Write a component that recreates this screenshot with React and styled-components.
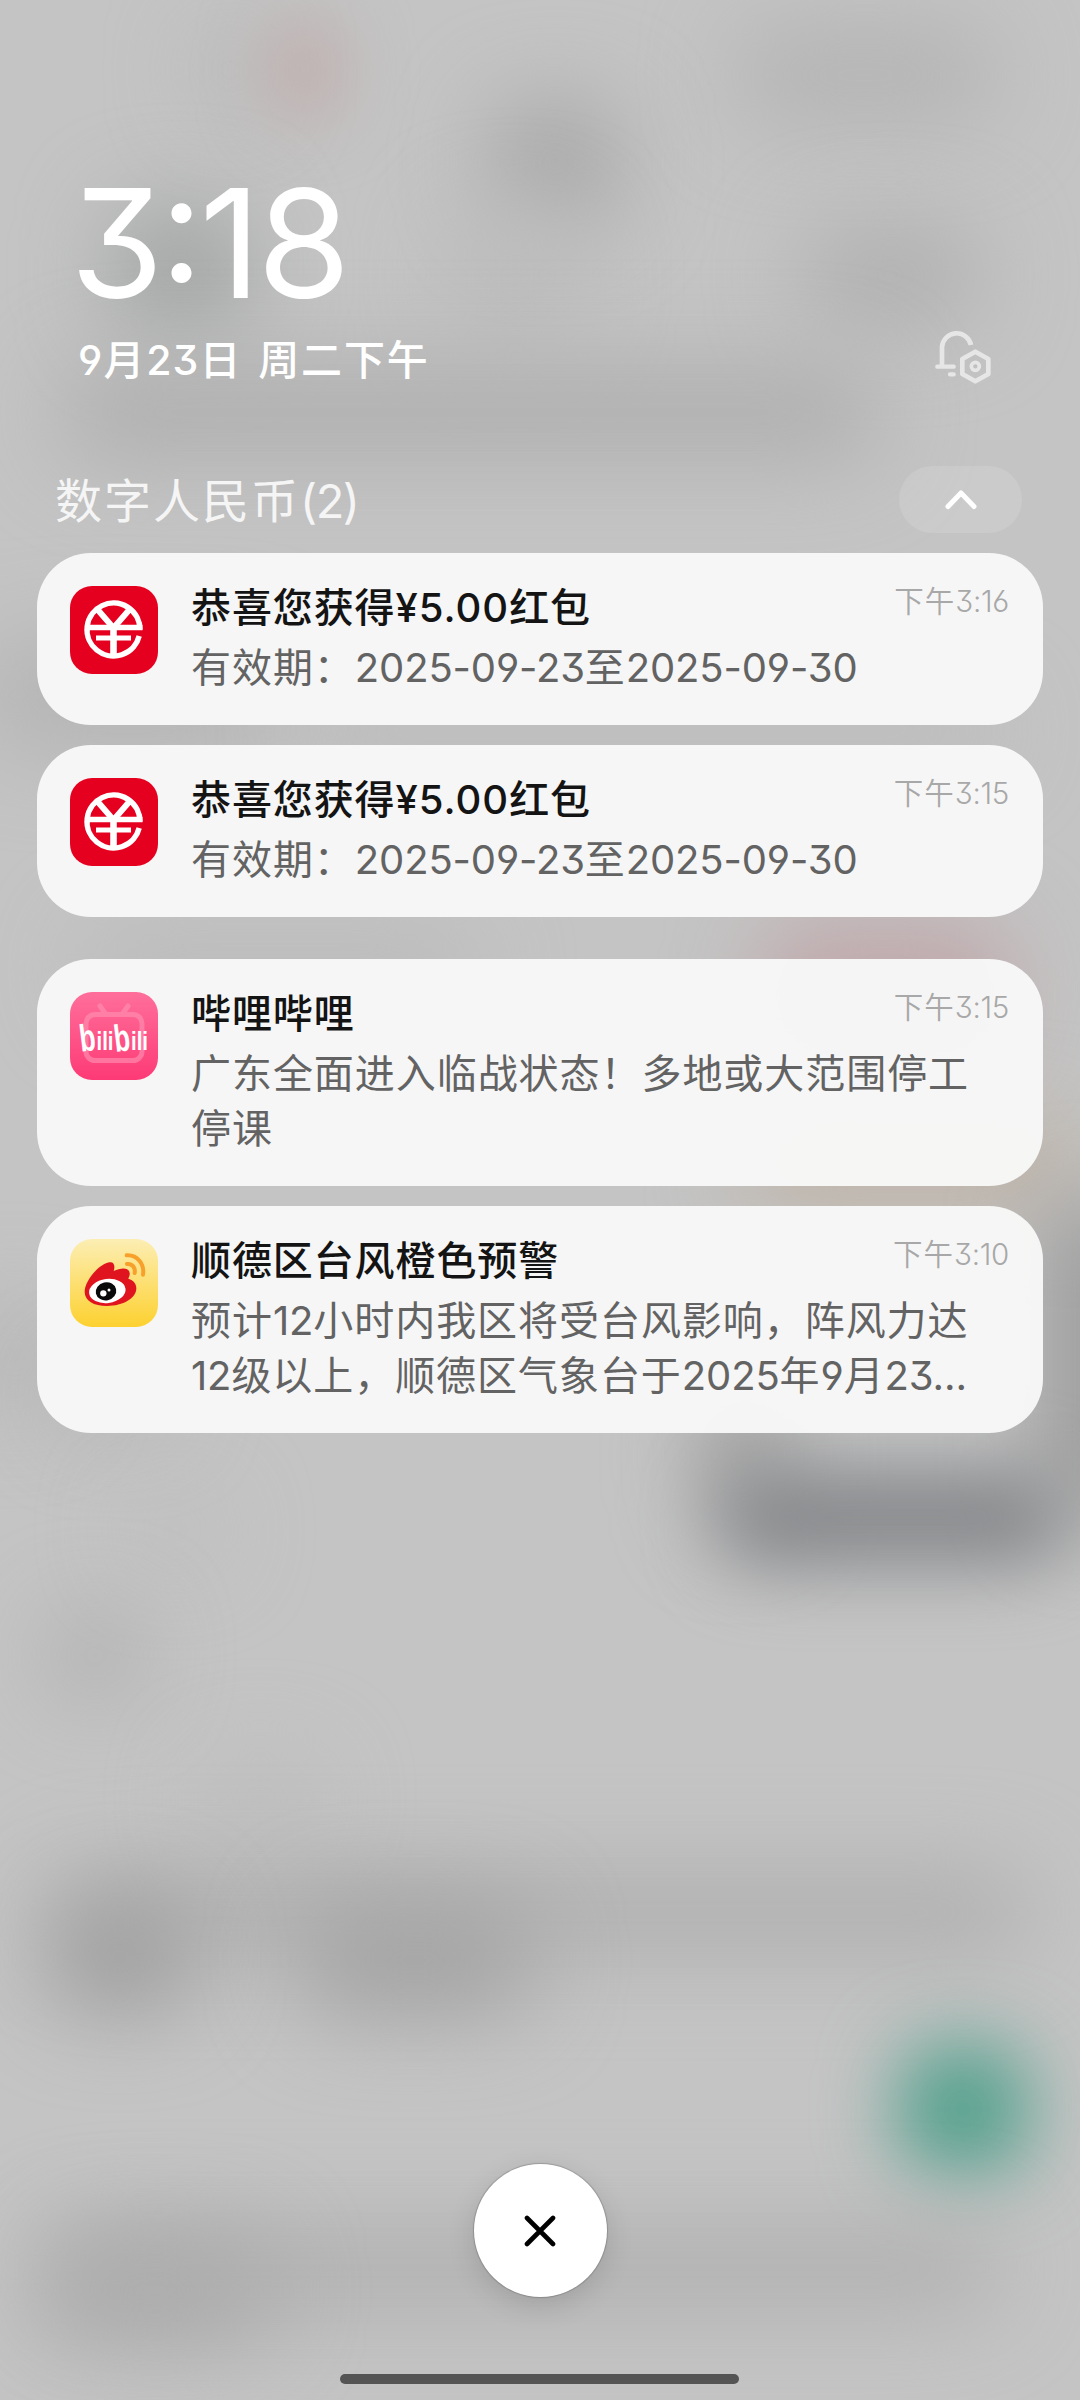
import React from 'react';
import styled, { createGlobalStyle } from 'styled-components';

const GlobalStyle = createGlobalStyle`
    body {
        margin: 0;
        background: #c4c4c4;
        font-family: 'Noto Sans CJK SC', sans-serif;
    }
`;

const Screen = styled.div`
    position: relative;
    width: 1080px;
    height: 2400px;
    box-sizing: border-box;
    padding: 168px 37px 16px;
    display: flex;
    flex-direction: column;
    overflow: hidden;
    isolation: isolate;
`;

// Blurred wallpaper, sits behind everything else.
const Wallpaper = styled.div`
    position: absolute;
    inset: 0;
    z-index: -1;
    background: #c4c4c4;
`;

const Blob = styled.div`
    position: absolute;
    left: ${p => p.$x}px;
    top: ${p => p.$y}px;
    width: ${p => p.$w}px;
    height: ${p => p.$h}px;
    border-radius: 40px;
    background: ${p => p.$color};
    filter: blur(${p => p.$blur || 44}px);
`;

// Digits and punctuation use Inter with flat three and open six / nine.
// The zero line-height keeps the run from stretching the line it sits in.
const Latin = styled.span`
    font-family: 'Inter', sans-serif;
    font-feature-settings: 'cv09', 'cv03', 'cv04';
    line-height: 0;
    letter-spacing: ${p => p.$spacing}px;
`;

const Clock = styled.div`
    display: flex;
    height: 150px;
    margin-left: 33px;
    line-height: 150px;
    font-family: 'Inter', sans-serif;
    font-feature-settings: 'cv09', 'case';
    font-size: 151px;
    font-weight: 370;
    letter-spacing: -3.8px;
    color: #fff;
`;

const DateRow = styled.div`
    display: flex;
    align-items: center;
    justify-content: space-between;
    height: 77px;
    padding: 0 51px 0 41px;
`;

const DateText = styled.div`
    font-size: 41px;
    font-weight: 500;
    line-height: 60px;
    letter-spacing: 1.8px;
    word-spacing: 5px;
    white-space: pre;
    color: #fff;
`;

const GroupHeader = styled.div`
    display: flex;
    align-items: center;
    justify-content: space-between;
    height: 67px;
    margin: 71px 0 20px;
    padding: 0 21px 0 18px;
`;

const GroupTitle = styled.div`
    font-size: 47px;
    line-height: 64px;
    padding-bottom: 3px;
    letter-spacing: 2px;
    color: #f5f5f5;
`;

const CollapseButton = styled.button`
    display: flex;
    align-items: center;
    justify-content: center;
    width: 123px;
    height: 67px;
    padding: 0;
    border: none;
    border-radius: 34px;
    background: rgba(255, 255, 255, 0.12);
`;

const Group = styled.div`
    display: flex;
    flex-direction: column;
    gap: 20px;
    margin-bottom: ${p => p.$last ? 0 : 42}px;
`;

const Card = styled.article`
    display: flex;
    height: ${p => p.$lines > 1 ? 227 : 172}px;
    box-sizing: border-box;
    padding: 25px 34px 0 33px;
    border-radius: 54px;
    background: rgba(248, 248, 248, 0.965);
`;

const AppIcon = styled.div`
    flex: none;
    width: 88px;
    height: 88px;
    margin: 8px 33px 0 0;
    border-radius: 22px;
    overflow: hidden;
    background: ${p => p.$background};

    > svg {
        display: block;
    }
`;

const Content = styled.div`
    flex: 1;
    min-width: 0;
`;

const TitleRow = styled.div`
    display: flex;
    justify-content: space-between;
    height: 60px;
`;

const Title = styled.div`
    font-size: 40px;
    font-weight: 500;
    line-height: 54px;
    letter-spacing: 0.9px;
    color: #141414;
`;

const Time = styled.div`
    font-size: 29.5px;
    font-weight: 350;
    line-height: 43px;
    letter-spacing: 1px;
    color: #a8a8a8;
`;

const Line = styled.div`
    font-size: 40px;
    font-weight: 400;
    line-height: 55px;
    letter-spacing: 0.95px;
    white-space: nowrap;
    color: #636363;
`;

const Footer = styled.footer`
    display: flex;
    flex-direction: column;
    align-items: center;
    gap: 77px;
    margin-top: auto;
`;

const CloseButton = styled.button`
    display: flex;
    align-items: center;
    justify-content: center;
    width: 133px;
    height: 133px;
    padding: 0;
    border: none;
    border-radius: 50%;
    background: #fff;
    box-shadow: 0 0 1px 1px rgba(0, 0, 0, 0.18), 0 8px 28px rgba(0, 0, 0, 0.13);
`;

const HomeBar = styled.div`
    width: 399px;
    height: 10px;
    margin-right: 1px;
    border-radius: 5px;
    background: #545454;
`;

const blobs = [
    { x: 200, y: 30, w: 60, h: 80, color: '#b6b6b6' },
    { x: 270, y: 20, w: 70, h: 100, color: '#c0acac', blur: 34 },
    { x: 735, y: 25, w: 260, h: 100, color: '#b4b4b4' },
    { x: 490, y: 100, w: 130, h: 125, color: '#a9a9a9' },
    { x: 450, y: 210, w: 130, h: 130, color: '#bcbcbc' },
    { x: 110, y: 205, w: 140, h: 130, color: '#a4a7a6' },
    { x: 800, y: 225, w: 180, h: 100, color: '#b0b0b0' },
    { x: 60, y: 365, w: 820, h: 95, color: '#afafaf' },
    { x: -20, y: 640, w: 300, h: 110, color: '#b4b4b4' },
    { x: 300, y: 700, w: 700, h: 60, color: '#bababa' },
    { x: 80, y: 930, w: 400, h: 80, color: '#bbbbbb' },
    { x: 760, y: 925, w: 250, h: 140, color: '#c0a7aa' },
    { x: 740, y: 1120, w: 340, h: 90, color: '#bfb3a6' },
    { x: 1040, y: 1200, w: 110, h: 320, color: '#9b9b9b' },
    { x: -30, y: 1300, w: 90, h: 110, color: '#b6b6b6' },
    { x: 60, y: 1370, w: 110, h: 50, color: '#b0b0b0' },
    { x: 705, y: 1380, w: 80, h: 150, color: '#9e9e9e' },
    { x: 720, y: 1470, w: 345, h: 95, color: '#85878a', blur: 36 },
    { x: 130, y: 1500, w: 90, h: 60, color: '#bdbdbd' },
    { x: 50, y: 1615, w: 90, h: 80, color: '#acacac' },
    { x: 200, y: 1760, w: 120, h: 80, color: '#bdbdbd' },
    { x: 50, y: 1870, w: 980, h: 85, color: '#afafaf' },
    { x: 50, y: 1905, w: 140, h: 105, color: '#9e9e9e' },
    { x: 300, y: 1905, w: 230, h: 110, color: '#a4a4a4' },
    { x: 898, y: 2044, w: 130, h: 130, color: '#54a18d', blur: 38 },
    { x: 50, y: 2225, w: 950, h: 85, color: '#b0b0b0' },
    { x: 40, y: 2235, w: 230, h: 110, color: '#acacac' },
];

const BellSettingsIcon = () => (
    <svg width="58" height="56" viewBox="0 0 174 168" fill="none" stroke="#e6e6e6" strokeWidth="14">
        <path d="M24 110V54a44 44 0 0 1 87-6" strokeLinejoin="round" />
        <path d="M10 113h49M48 136h11" strokeLinecap="round" strokeWidth="13" />
        <path d="M124 68l39 22v45l-39 22-39-22V90z" strokeLinejoin="round" />
        <circle cx="124" cy="112" r="12" strokeWidth="11" />
    </svg>
);

const ChevronUpIcon = () => (
    <svg width="34" height="22" viewBox="0 0 34 22" fill="none" stroke="#fff" strokeWidth="5" strokeLinecap="round" strokeLinejoin="round">
        <path d="M4 17.500L17 4l13 13.500" />
    </svg>
);

const CloseIcon = () => (
    <svg width="32" height="32" viewBox="0 0 32 32" stroke="#000" strokeWidth="4.600" strokeLinecap="round">
        <path d="M3 3l26 26M29 3L3 29" />
    </svg>
);

const YuanIcon = () => (
    <svg width="88" height="88" viewBox="0 0 88 88" fill="none" stroke="#fff" strokeWidth="5.400">
        <path d="M72.500 41.500H17.500" />
        <path d="M70 43.500A26.500 26.500 0 1 0 69.200 50" />
        <path d="M27.500 23.500L43.500 42l16-18.500" strokeWidth="6" />
        <path d="M43.500 40v30" strokeWidth="6.600" />
        <path d="M26 52h35" strokeWidth="5.200" />
    </svg>
);

const BilibiliIcon = () => (
    <svg width="88" height="88" viewBox="0 0 88 88">
        <g fill="none" stroke="#ff8fb2" strokeWidth="5" strokeLinecap="round" opacity="0.65">
            <rect x="16" y="22.500" width="56" height="46" rx="9" />
            <path d="M30 14l5 7M58 14l-5 7" />
        </g>
        <g fill="#fff" fontFamily="'Liberation Sans', sans-serif" fontWeight="700">
            <text x="11" y="59" fontSize="38" textLength="16" lengthAdjust="spacingAndGlyphs" transform="rotate(-7 18 59)">b</text>
            <text x="26.500" y="58" fontSize="26" textLength="17" lengthAdjust="spacingAndGlyphs">ili</text>
            <text x="45.500" y="59" fontSize="38" textLength="16" lengthAdjust="spacingAndGlyphs" transform="rotate(-7 53 59)">b</text>
            <text x="61" y="58" fontSize="26" textLength="17" lengthAdjust="spacingAndGlyphs">ili</text>
        </g>
    </svg>
);

const WeiboIcon = () => (
    <svg width="88" height="88" viewBox="0 0 264 264">
        <path d="M44 158C44 128 82 78 118 70c15-3 18 12 13 26 20-9 42-11 47 2 3 8 0 14-3 21 16 5 24 15 24 29 0 30-40 53-88 53-40 0-67-16-67-43z" fill="#e0141e" />
        <ellipse cx="112" cy="156" rx="55" ry="36" fill="#fff" transform="rotate(-7 112 156)" />
        <ellipse cx="108" cy="157" rx="31" ry="27" fill="#0a0a0a" transform="rotate(-12 108 157)" />
        <circle cx="100" cy="163" r="9.500" fill="#fff" />
        <circle cx="117" cy="153" r="4.500" fill="#fff" />
        <g fill="none" stroke="#f7a02c" strokeWidth="12" strokeLinecap="round">
            <path d="M170 49c32-2 54 26 49 58" />
            <path d="M171 75c16-2 26 12 23 27" />
        </g>
    </svg>
);

const apps = {
    ecny: { Icon: YuanIcon, background: '#e6001f' },
    bilibili: { Icon: BilibiliIcon, background: 'linear-gradient(#ff6f9b, #fd3a76)' },
    weibo: { Icon: WeiboIcon, background: 'linear-gradient(#fceeb4, #fdd130)' },
};

const groups = [
    [
        { app: 'ecny', title: '恭喜您获得¥5.00红包', time: '下午3:16', lines: ['有效期：2025-09-23至2025-09-30'] },
        { app: 'ecny', title: '恭喜您获得¥5.00红包', time: '下午3:15', lines: ['有效期：2025-09-23至2025-09-30'] },
    ],
    [
        { app: 'bilibili', title: '哔哩哔哩', time: '下午3:15', lines: ['广东全面进入临战状态！多地或大范围停工', '停课'] },
        { app: 'weibo', title: '顺德区台风橙色预警', time: '下午3:10', lines: ['预计12小时内我区将受台风影响，阵风力达', '12级以上，顺德区气象台于2025年9月23…'] },
    ],
];

// Wraps every run of digits / ASCII punctuation so that it gets its own font and spacing.
const MixedText = ({ text, spacing }) => (
    text.split(/([0-9¥.:()…-]+)/).map((part, i) => (
        i % 2 ? <Latin key={i} $spacing={spacing}>{part}</Latin> : part
    ))
);

const Notification = ({ app, title, time, lines }) => {
    const { Icon, background } = apps[app];

    return (
        <Card $lines={lines.length}>
            <AppIcon $background={background}><Icon /></AppIcon>
            <Content>
                <TitleRow>
                    <Title><MixedText text={title} spacing={1} /></Title>
                    <Time><MixedText text={time} spacing={-0.3} /></Time>
                </TitleRow>
                {lines.map(line => (
                    <Line key={line}><MixedText text={line} spacing={-0.15} /></Line>
                ))}
            </Content>
        </Card>
    );
};

export default function App() {
    return (
        <Screen>
            <GlobalStyle />
            <Wallpaper>
                {blobs.map((b, i) => (
                    <Blob key={i} $x={b.x} $y={b.y} $w={b.w} $h={b.h} $color={b.color} $blur={b.blur} />
                ))}
            </Wallpaper>
            <Clock>3:18</Clock>
            <DateRow>
                <DateText><MixedText text="9月23日 周二下午" spacing={1.1} /></DateText>
                <BellSettingsIcon />
            </DateRow>
            <GroupHeader>
                <GroupTitle><MixedText text="数字人民币(2)" spacing={-1.5} /></GroupTitle>
                <CollapseButton><ChevronUpIcon /></CollapseButton>
            </GroupHeader>
            {groups.map((items, i) => (
                <Group key={i} $last={i === groups.length - 1}>
                    {items.map((item, j) => <Notification key={j} {...item} />)}
                </Group>
            ))}
            <Footer>
                <CloseButton><CloseIcon /></CloseButton>
                <HomeBar />
            </Footer>
        </Screen>
    );
}
